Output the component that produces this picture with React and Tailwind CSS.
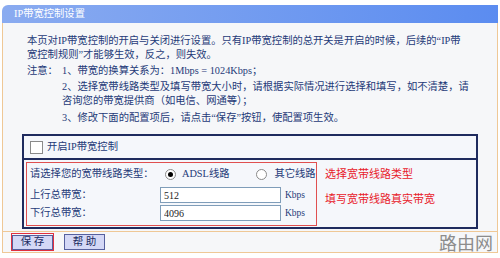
export default function App() {
  return (
    <div className="w-[500px] h-[258px] bg-white overflow-hidden font-['Liberation_Serif','Noto_Sans_CJK_SC',serif] text-[10.3px] text-[#1e3a78]">
      <div className="ml-[2px] w-[496px] pt-[5px]">
        {/* title bar */}
        <div className="h-[18px] rounded-tl-[6px] bg-gradient-to-r from-[#8aabf0] to-[#5b8cf0] pl-[12px] flex items-center text-white">
          IP带宽控制设置
        </div>

        <div className="border-x border-b border-[#efc896] bg-[#f6f7f9]">
          {/* help text */}
          <div className="pt-[11px] pl-[24px] leading-[14px] whitespace-nowrap">
            <p>本页对IP带宽控制的开启与关闭进行设置。只有IP带宽控制的总开关是开启的时候，后续的“IP带</p>
            <p>宽控制规则”才能够生效，反之，则失效。</p>
            <div className="flex mt-[2px]">
              <span className="w-[35px] shrink-0">注意：</span>
              <div>
                <p>1、带宽的换算关系为：1Mbps = 1024Kbps；</p>
                <p className="mt-[2px]">2、选择宽带线路类型及填写带宽大小时，请根据实际情况进行选择和填写，如不清楚，请</p>
                <p>咨询您的带宽提供商（如电信、网通等）；</p>
                <p className="mt-[3px]">3、修改下面的配置项后，请点击“保存”按钮，使配置项生效。</p>
              </div>
            </div>
          </div>

          {/* settings box */}
          <div className="ml-[19px] mt-[9px] mb-[2px] w-[456px] border-2 border-[#1f2b5e] bg-[#f5f7fb]">
            <div className="h-[24px] flex items-center pl-[6px] gap-[4px] border-b-2 border-[#1f2b5e]">
              <span className="w-[13px] h-[13px] bg-white border border-[#8a8a8a]"></span>
              <span>开启IP带宽控制</span>
            </div>
            <div className="flex pb-[1px]">
              <div className="ml-[2px] mt-[2px] w-[291px] h-[64px] border border-[#e05050] pl-[3px]">
                <div className="h-[22px] flex items-center">
                  <span className="w-[130px]">请选择您的宽带线路类型：</span>
                  <span className="ml-[5px] w-[11px] h-[11px] rounded-full bg-white border border-[#8a8a8a] flex items-center justify-center">
                    <span className="w-[5px] h-[5px] rounded-full bg-black"></span>
                  </span>
                  <span className="ml-[6px]">ADSL线路</span>
                  <span className="ml-[27px] w-[11px] h-[11px] rounded-full bg-white border border-[#8a8a8a]"></span>
                  <span className="ml-[7px]">其它线路</span>
                </div>
                <div className="mt-[2px] h-[16px] flex items-center">
                  <span className="w-[130px]">上行总带宽：</span>
                  <input
                    readOnly
                    value="512"
                    className="w-[121px] h-[16px] bg-white border border-[#7f9db9] pl-[3px] text-[10px] text-[#222] outline-none"
                  />
                  <span className="ml-[4px] text-[9.5px]">Kbps</span>
                </div>
                <div className="mt-[2px] h-[16px] flex items-center">
                  <span className="w-[130px]">下行总带宽：</span>
                  <input
                    readOnly
                    value="4096"
                    className="w-[121px] h-[16px] bg-white border border-[#7f9db9] pl-[3px] text-[10px] text-[#222] outline-none"
                  />
                  <span className="ml-[4px] text-[9.5px]">Kbps</span>
                </div>
              </div>
              <div className="ml-[8px] pt-[7px] text-[11px] leading-[14px] text-[#e8202a] whitespace-nowrap">
                <p>选择宽带线路类型</p>
                <p className="mt-[11px]">填写宽带线路真实带宽</p>
              </div>
            </div>
          </div>

          {/* footer */}
          <div className="h-[21px] border-t border-[#efc896] flex items-center">
            <div className="ml-[8px] border border-[#e03040] p-[0px]">
              <button className="w-[41px] h-[15px] bg-[#d4d8f6] border border-[#56609e] text-[10.5px] leading-none text-[#1a2a60]">
                保 存
              </button>
            </div>
            <button className="ml-[10px] w-[41px] h-[16px] bg-[#d4d8f6] border border-[#56609e] text-[10.5px] leading-none text-[#1a2a60]">
              帮 助
            </button>
            <span className="ml-auto mr-[4px] font-['Noto_Sans_CJK_SC',sans-serif] text-[18px] leading-none text-[#8c8c8c]">
              路由网
            </span>
          </div>
        </div>
      </div>
    </div>
  );
}
